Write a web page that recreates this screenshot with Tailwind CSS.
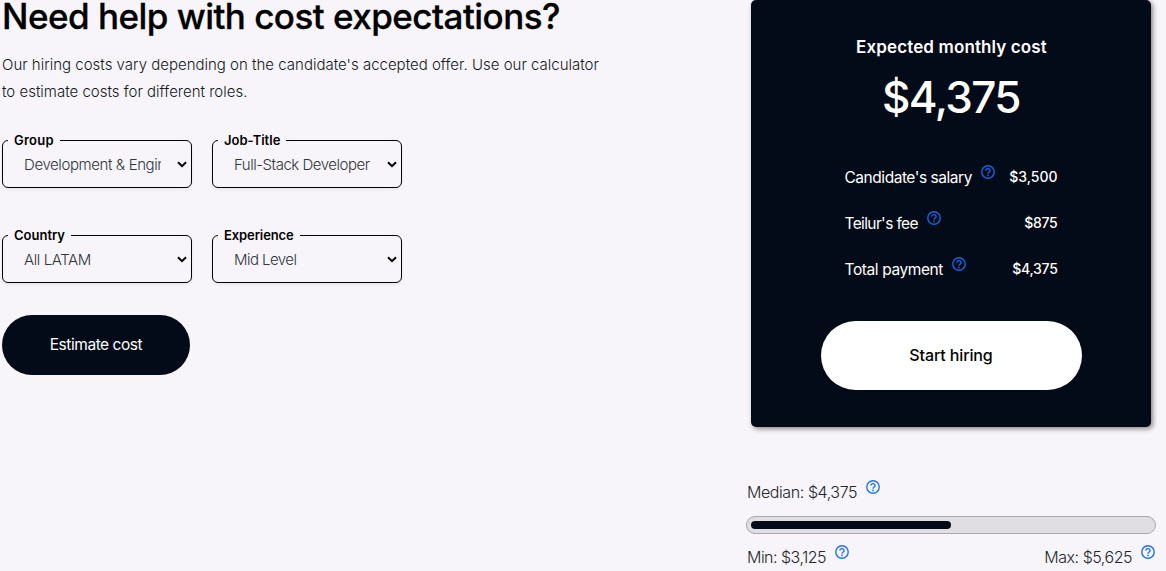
<!DOCTYPE html>
<html lang="en">
<head>
<meta charset="utf-8">
<title>Cost calculator</title>
<script src="https://cdn.jsdelivr.net/npm/@tailwindcss/browser@4"></script>
</head>
<body class="h-[571px] overflow-hidden bg-[#f7f5f9] font-['Inter',sans-serif] text-black">
<svg class="hidden">
  <symbol id="help" viewBox="0 0 14 14"><g fill="none" stroke="currentColor" stroke-width="1.4"><circle cx="7" cy="7" r="6.2"/><path d="M4.9 5.6a2.1 1.9 0 1 1 3.1 1.6C7.3 7.7 7 7.9 7 8.7"/></g><circle cx="7" cy="10.4" r=".85" fill="currentColor"/></symbol>
  <symbol id="chev" viewBox="0 0 10 7"><path d="M1 1.2 5 5.2 9 1.2" fill="none" stroke="currentColor" stroke-width="2"/></symbol>
</svg>
<main class="flex h-full">
  <section class="w-[746px] shrink-0 pl-0.5">
    <h1 class="-mt-[5px] h-[43px] whitespace-nowrap text-[35px] leading-[42px] font-medium tracking-[-0.53px] [-webkit-text-stroke:0.3px_black]">Need help with cost expectations?</h1>
    <div class="mt-[13px] whitespace-nowrap text-[15px] leading-[27px] font-light text-[#16181d]">
      <p>Our hiring costs vary depending on the candidate's accepted offer. Use our calculator</p>
      <p>to estimate costs for different roles.</p>
    </div>
    <form class="mt-[25px]">
      <div class="grid w-[400px] grid-cols-2 gap-x-5 gap-y-[37px]">
        <fieldset class="h-[58px] min-w-0 rounded-md border border-black pl-[5px] shadow-[0_2px_3px_rgba(0,0,0,0.06)]">
          <legend class="h-5 px-1.5 text-[13px] leading-5 font-semibold"><span class="tracking-[0.25px]">Group</span></legend>
          <div class="flex h-[29px] items-center pr-1 pl-4"><span class="w-[137px] overflow-hidden text-[15px] leading-6 font-light tracking-[-0.4px] whitespace-nowrap text-[#33343a]">Development &amp; Engineering</span><svg class="ml-auto h-[7px] w-2.5"><use href="#chev"/></svg></div>
        </fieldset>
        <fieldset class="h-[58px] min-w-0 rounded-md border border-black pl-[5px] shadow-[0_2px_3px_rgba(0,0,0,0.06)]">
          <legend class="h-5 px-1.5 text-[13px] leading-5 font-semibold">Job-Title</legend>
          <div class="flex h-[29px] items-center pr-1 pl-4"><span class="w-[137px] overflow-hidden text-[15px] leading-6 font-light tracking-[-0.48px] whitespace-nowrap text-[#33343a]">Full-Stack Developer</span><svg class="ml-auto h-[7px] w-2.5"><use href="#chev"/></svg></div>
        </fieldset>
        <fieldset class="h-[58px] min-w-0 rounded-md border border-black pl-[5px] shadow-[0_2px_3px_rgba(0,0,0,0.06)]">
          <legend class="h-5 px-1.5 text-[13px] leading-5 font-semibold">Country</legend>
          <div class="flex h-[29px] items-center pr-1 pl-4"><span class="w-[137px] overflow-hidden text-[15px] leading-6 font-light tracking-[-0.4px] whitespace-nowrap text-[#33343a]">All LATAM</span><svg class="ml-auto h-[7px] w-2.5"><use href="#chev"/></svg></div>
        </fieldset>
        <fieldset class="h-[58px] min-w-0 rounded-md border border-black pl-[5px] shadow-[0_2px_3px_rgba(0,0,0,0.06)]">
          <legend class="h-5 px-1.5 text-[13px] leading-5 font-semibold tracking-[-0.1px]">Experience</legend>
          <div class="flex h-[29px] items-center pr-1 pl-4"><span class="w-[137px] overflow-hidden text-[15px] leading-6 font-light tracking-[-0.55px] whitespace-nowrap text-[#33343a]">Mid Level</span><svg class="ml-auto h-[7px] w-2.5"><use href="#chev"/></svg></div>
        </fieldset>
      </div>
      <button type="button" class="mt-8 flex h-[60px] w-[188px] items-center justify-center rounded-full bg-[#040b18] pb-px text-[15.5px] tracking-[-0.45px] text-white">Estimate cost</button>
    </form>
  </section>
  <aside class="w-[410px] shrink-0">
    <div class="mx-[5px] flex h-[427px] flex-col items-center rounded-[5px] bg-[#040b18] text-white shadow-[2px_2px_5px_rgba(0,0,0,0.45)]">
      <h2 class="mt-[33px] h-7 pl-px text-[17px] leading-7 font-semibold tracking-[0.12px]">Expected monthly cost</h2>
      <p class="mt-1.5 h-[60px] text-[44px] leading-[60px] font-medium tracking-[-1.6px]">$4,375</p>
      <dl class="mt-[27px] w-[213px] text-[15.5px] whitespace-nowrap">
        <div class="flex h-[46px] items-center"><dt class="flex items-center"><span class="pt-0.5 tracking-[-0.46px]">Candidate's salary</span><svg class="mb-[11px] ml-[9px] size-3.5 text-[#1266e3]"><use href="#help"/></svg></dt><dd class="ml-auto pb-px text-[14px] font-medium">$3,500</dd></div>
        <div class="flex h-[46px] items-center"><dt class="flex items-center"><span class="pt-0.5 tracking-[-0.62px]">Teilur's fee</span><svg class="mb-[11px] ml-[9px] size-3.5 text-[#1266e3]"><use href="#help"/></svg></dt><dd class="ml-auto pb-px text-[14px] font-medium tracking-[-0.25px]">$875</dd></div>
        <div class="flex h-[46px] items-center"><dt class="flex items-center"><span class="pt-0.5 tracking-[-0.4px]">Total payment</span><svg class="mb-[11px] ml-[9px] size-3.5 text-[#1266e3]"><use href="#help"/></svg></dt><dd class="ml-auto pb-px text-[14px] font-medium tracking-[-0.3px]">$4,375</dd></div>
      </dl>
      <button type="button" class="mt-[29px] flex h-[69px] w-[261px] items-center justify-center rounded-full bg-white pb-px text-[16px] font-medium tracking-[-0.12px] text-black">Start hiring</button>
    </div>
    <div class="mt-[53px] text-[16px] font-light text-[#24262c]">
      <p class="flex h-6 items-center pl-px"><span class="tracking-[-0.42px]">Median: $4,375</span><svg class="mb-[11px] ml-[9px] size-3.5 text-[#1a73e8]"><use href="#help"/></svg></p>
      <div class="mt-3 flex h-[18px] items-center rounded-full border border-[#a9a8ac] bg-[#e0dee2] px-1"><div class="h-2 w-[200px] rounded-full bg-[#040b18]"></div></div>
      <div class="mt-[11px] flex h-6 justify-between px-px">
        <p class="flex items-center"><span class="tracking-[-0.52px]">Min: $3,125</span><svg class="mb-[11px] ml-[9px] size-3.5 text-[#1a73e8]"><use href="#help"/></svg></p>
        <p class="flex items-center"><span class="tracking-[-0.48px]">Max: $5,625</span><svg class="mb-[11px] ml-[9px] size-3.5 text-[#1a73e8]"><use href="#help"/></svg></p>
      </div>
    </div>
  </aside>
</main>
</body>
</html>
